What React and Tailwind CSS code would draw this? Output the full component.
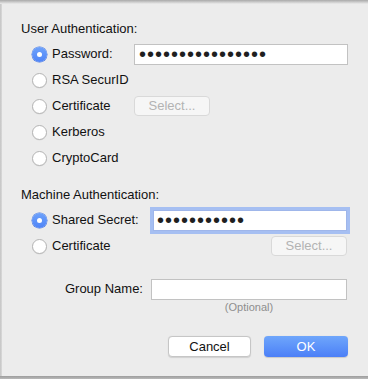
function Radio({ checked }) {
  return checked ? (
    <span className="flex h-[15px] w-[15px] shrink-0 items-center justify-center rounded-full bg-gradient-to-b from-[#6ea2fb] to-[#4f84f7] shadow-[0_0_0_0.5px_#4a78e0]">
      <span className="h-[5px] w-[5px] rounded-full bg-white" />
    </span>
  ) : (
    <span className="h-[15px] w-[15px] shrink-0 rounded-full border border-[#b4b4b4] bg-white shadow-[0_0.5px_0.5px_rgba(0,0,0,0.08)]" />
  );
}

function Dots({ count }) {
  return (
    <span className="text-[20px] leading-none tracking-[1px] text-[#1f1f1f]">
      {"•".repeat(count)}
    </span>
  );
}

function SelectButton({ className = "" }) {
  return (
    <div
      className={`flex h-[20px] w-[76px] items-center justify-center rounded-[4px] border border-[#d9d9d9] bg-[#f6f6f6] text-[13px] text-[#b3b3b3] ${className}`}
    >
      Select...
    </div>
  );
}

function RadioRow({ label, checked, children }) {
  return (
    <div className="flex h-[26px] items-center">
      <div className="flex w-[101px] items-center gap-[5px] pl-[11px]">
        <Radio checked={checked} />
        <span className="whitespace-nowrap">{label}</span>
      </div>
      {children}
    </div>
  );
}

export default function App() {
  return (
    <div
      className="relative flex h-[379px] w-[368px] overflow-hidden bg-[#ececec] text-[13px] text-[#111]"
      style={{ fontFamily: '"Liberation Sans", Arial, sans-serif' }}
    >
      {/* shadow from title bar */}
      <div className="pointer-events-none absolute inset-x-0 top-0 h-[4px] bg-gradient-to-b from-[#a9a9a9] to-[#ececec]" />
      {/* bottom edge of window behind */}
      <div className="pointer-events-none absolute inset-x-0 bottom-0 h-[3px] bg-gradient-to-b from-[#9d9d9d] to-[#b9b9b9]" />

      <div className="w-[2px] shrink-0 bg-gradient-to-r from-[#c4c4c4] to-[#dadada]" />

      <div className="flex flex-1 flex-col pl-[19px] pt-[21px]">
        <div className="h-4 leading-4">User Authentication:</div>

        <div className="mt-1 flex flex-col">
          <RadioRow label="Password:" checked>
            <div className="ml-[12px] flex h-[21px] w-[214px] items-center border border-[#c2c2c2] bg-white pl-[4px]">
              <Dots count={16} />
            </div>
          </RadioRow>
          <RadioRow label="RSA SecurID" />
          <RadioRow label="Certificate">
            <SelectButton className="ml-[12px]" />
          </RadioRow>
          <RadioRow label="Kerberos" />
          <RadioRow label="CryptoCard" />
        </div>

        <div className="mt-4 h-4 leading-4">Machine Authentication:</div>

        <div className="mt-1 flex flex-col">
          <div className="flex h-[26px] items-center">
            <div className="flex w-[118px] items-center gap-[5px] pl-[11px]">
              <Radio checked />
              <span className="whitespace-nowrap">Shared Secret:</span>
            </div>
            <div className="ml-[14px] flex h-[21px] w-[194px] items-center border border-[#9fb6ea] bg-white pl-[3px] shadow-[0_0_0_3px_#a6bff2]">
              <Dots count={11} />
            </div>
          </div>
          <div className="flex h-[26px] items-center justify-between pr-[21px]">
            <div className="flex items-center gap-[5px] pl-[11px]">
              <Radio />
              <span>Certificate</span>
            </div>
            <SelectButton />
          </div>
        </div>

        <div className="mt-[18px] flex h-[24px] items-center">
          <span className="w-[122px] text-right">Group Name:</span>
          <div className="ml-[8px] h-[21px] w-[196px] border border-[#c2c2c2] bg-white" />
        </div>
        <div className="ml-[130px] w-[196px] text-center text-[11px] leading-[13px] text-[#8e8e8e]">
          (Optional)
        </div>

        <div className="mt-[22px] flex justify-end gap-[13px] pr-[20px]">
          <div className="flex h-[21px] w-[83px] items-center justify-center rounded-[4px] border border-[#c6c6c6] bg-white shadow-[0_0.5px_1px_rgba(0,0,0,0.12)]">
            Cancel
          </div>
          <div className="flex h-[21px] w-[84px] items-center justify-center rounded-[4px] bg-gradient-to-b from-[#6fa6fb] to-[#4c7ff7] text-white shadow-[0_0.5px_1px_rgba(0,0,0,0.15)]">
            OK
          </div>
        </div>
      </div>
    </div>
  );
}
